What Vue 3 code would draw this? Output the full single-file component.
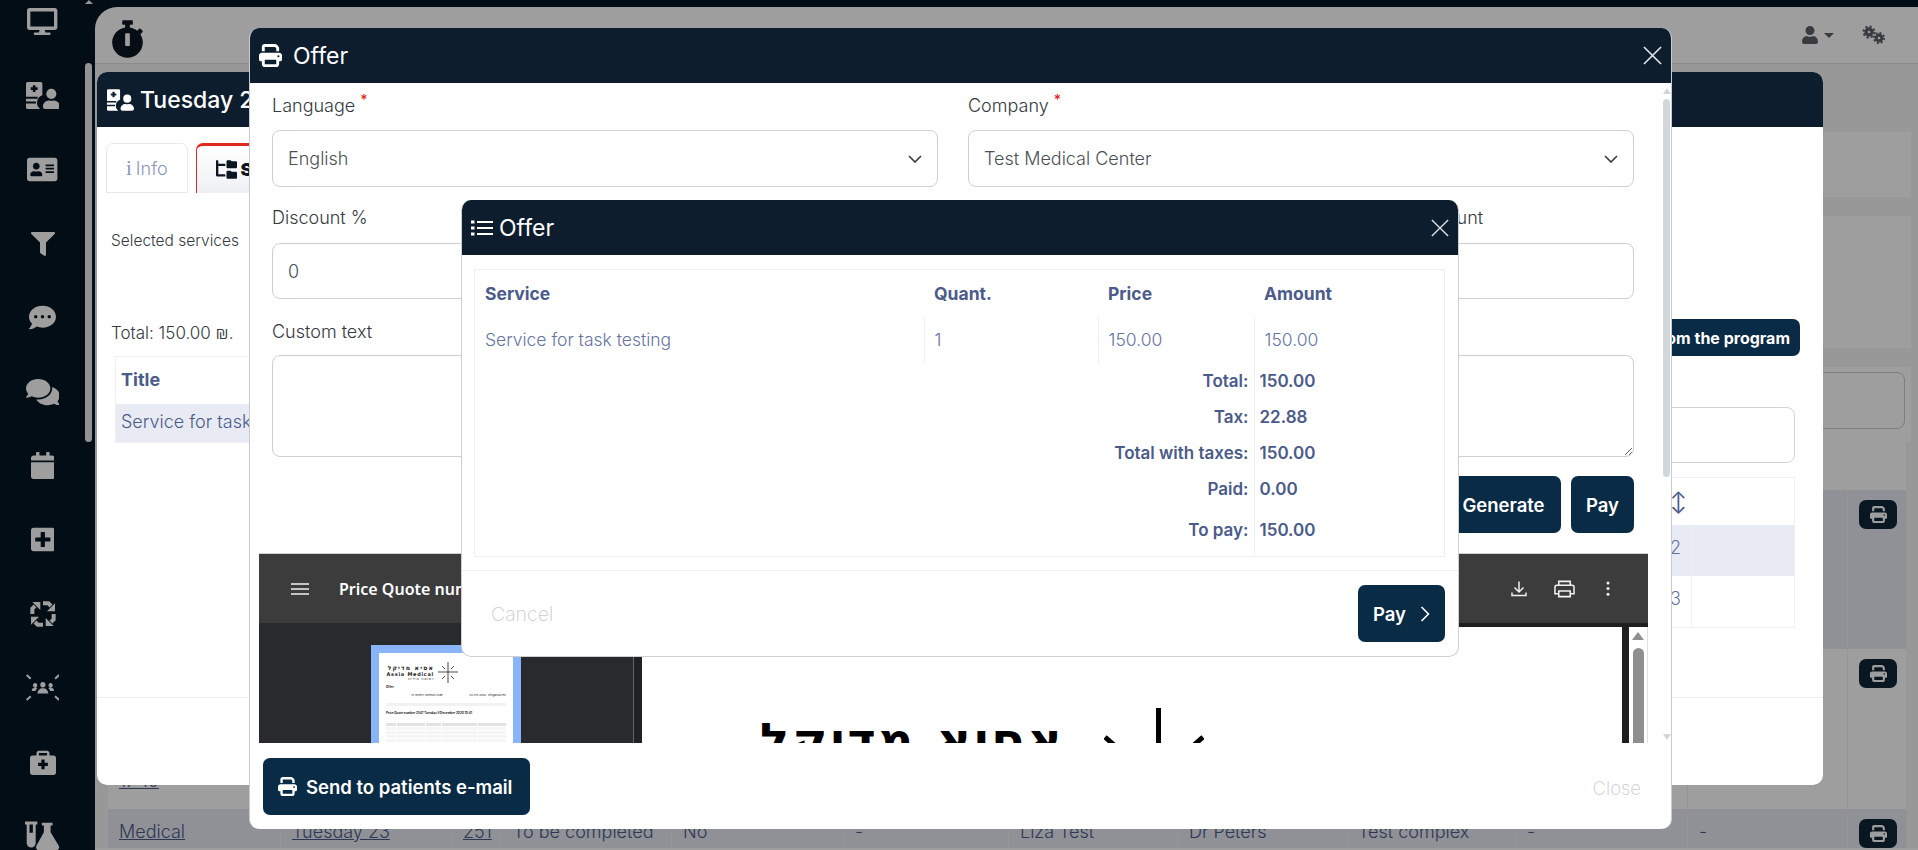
<script setup>
const printPath = 'M128 0C92.7 0 64 28.7 64 64v96h64V64H354.7L384 93.3V160h64V93.3c0-17-6.7-33.3-18.7-45.3L400 18.7C388 6.7 371.7 0 354.7 0H128zM384 352v32 64H128V384 368 352H384zm64 32h32c17.7 0 32-14.3 32-32V256c0-35.3-28.7-64-64-64H64c-35.3 0-64 28.7-64 64v96c0 17.7 14.3 32 32 32H64v64c0 35.3 28.7 64 64 64H384c35.3 0 64-28.7 64-64V384zM432 248a24 24 0 1 1 0 48 24 24 0 1 1 0-48z'
const hospitalUser = [
  'M30 0H280a30 30 0 0 1 30 30V250a150 150 0 0 0-40 262H30a30 30 0 0 1-30-30V30A30 30 0 0 1 30 0zM130 60v40H90v50h40v40h50v-40h40v-50h-40V60zM0 280v36h220v-36zM0 370v36h190v-36z',
  'M480 320a96 96 0 1 0-96-96 96 96 0 0 0 96 96zm48 32h-8.7a156 156 0 0 1-78.6 0H432a112 112 0 0 0-112 112 48 48 0 0 0 48 48h224a48 48 0 0 0 48-48 112 112 0 0 0-112-112z'
]

// меню слева, сверху вниз
const menu = [
  { h: 27, box: '0 0 576 512', paths: ['M528 0H48C21.5 0 0 21.5 0 48v320c0 26.5 21.5 48 48 48h192l-16 48h-72c-13.3 0-24 10.7-24 24s10.7 24 24 24h272c13.3 0 24-10.7 24-24s-10.7-24-24-24h-72l-16-48h192c26.5 0 48-21.5 48-48V48c0-26.5-21.5-48-48-48zm-16 352H64V64h448v288z'] },
  { h: 27, box: '0 0 640 512', paths: hospitalUser },
  { h: 27, box: '0 0 576 512', paths: ['M528 32H48C21.5 32 0 53.5 0 80v352c0 26.5 21.5 48 48 48h480c26.5 0 48-21.5 48-48V80c0-26.5-21.5-48-48-48zm-352 96c35.3 0 64 28.7 64 64s-28.7 64-64 64-64-28.7-64-64 28.7-64 64-64zm112 236.8c0 10.6-10 19.2-22.4 19.2H86.4C74 384 64 375.4 64 364.8v-19.2c0-31.8 30.1-57.6 67.2-57.6h5c12.3 5.1 25.7 8 39.8 8s27.6-2.9 39.8-8h5c37.1 0 67.2 25.8 67.2 57.6v19.2zM512 312c0 4.4-3.6 8-8 8H360c-4.4 0-8-3.6-8-8v-16c0-4.4 3.6-8 8-8h144c4.4 0 8 3.6 8 8v16zm0-64c0 4.4-3.6 8-8 8H360c-4.4 0-8-3.6-8-8v-16c0-4.4 3.6-8 8-8h144c4.4 0 8 3.6 8 8v16zm0-64c0 4.4-3.6 8-8 8H360c-4.4 0-8-3.6-8-8v-16c0-4.4 3.6-8 8-8h144c4.4 0 8 3.6 8 8v16z'] },
  { h: 24, box: '0 0 512 512', paths: ['M487.976 0H24.028C2.71 0-8.047 25.866 7.058 40.971L192 225.941V432c0 7.831 3.821 15.17 10.237 19.662l80 55.98C298.02 518.69 320 507.493 320 487.98V225.941l184.947-184.97C520.021 25.896 509.338 0 487.976 0z'] },
  { h: 27, box: '0 0 512 512', paths: ['M256 32C114.6 32 0 125.1 0 240c0 49.6 21.4 95 57 130.7C44.5 421.1 2.7 466 2.2 466.5c-2.2 2.3-2.8 5.7-1.5 8.7S4.8 480 8 480c66.3 0 116-31.8 140.6-51.4 32.7 12.3 69 19.4 107.4 19.4 141.4 0 256-93.1 256-208S397.4 32 256 32zM128 272c-17.7 0-32-14.3-32-32s14.3-32 32-32 32 14.3 32 32-14.3 32-32 32zm128 0c-17.7 0-32-14.3-32-32s14.3-32 32-32 32 14.3 32 32-14.3 32-32 32zm128 0c-17.7 0-32-14.3-32-32s14.3-32 32-32 32 14.3 32 32-14.3 32-32 32z'] },
  { h: 30, box: '0 0 576 512', paths: ['M416 192c0-88.4-93.1-160-208-160S0 103.6 0 192c0 34.3 14.1 65.9 38 92-13.4 30.2-35.5 54.2-35.8 54.5-2.2 2.3-2.8 5.7-1.5 8.7S4.8 352 8 352c36.6 0 66.9-12.3 88.7-25 32.2 15.7 70.3 25 111.3 25 114.9 0 208-71.6 208-160zm122 220c23.9-26 38-57.7 38-92 0-66.9-53.5-124.2-129.3-148.1.9 6.6 1.3 13.3 1.3 20.1 0 105.9-107.7 192-240 192-10.8 0-21.3-.8-31.7-1.9C207.8 439.6 281.8 480 368 480c41 0 79.1-9.2 111.3-25 21.8 12.7 52.1 25 88.7 25 3.2 0 6.1-1.9 7.3-4.8 1.3-2.9.7-6.3-1.5-8.7-.3-.3-22.4-24.2-35.8-54.5z'] },
  { h: 27, box: '0 0 448 512', paths: ['M12 192h424c6.6 0 12 5.4 12 12v260c0 26.5-21.5 48-48 48H48c-26.5 0-48-21.5-48-48V204c0-6.6 5.4-12 12-12zm436-44v-36c0-26.5-21.5-48-48-48h-48V12c0-6.6-5.4-12-12-12h-40c-6.6 0-12 5.4-12 12v52H160V12c0-6.6-5.4-12-12-12h-40c-6.6 0-12 5.4-12 12v52H48C21.5 64 0 85.5 0 112v36c0 6.6 5.4 12 12 12h424c6.6 0 12-5.4 12-12z'] },
  { h: 27, box: '0 0 448 512', paths: ['M400 32H48C21.5 32 0 53.5 0 80v352c0 26.5 21.5 48 48 48h352c26.5 0 48-21.5 48-48V80c0-26.5-21.5-48-48-48zm-32 252c0 6.6-5.4 12-12 12h-92v92c0 6.6-5.4 12-12 12h-56c-6.6 0-12-5.4-12-12v-92H92c-6.6 0-12-5.4-12-12v-56c0-6.6 5.4-12 12-12h92v-92c0-6.6 5.4-12 12-12h56c6.6 0 12 5.4 12 12v92h92c6.6 0 12 5.4 12 12v56z'] },
  { h: 32, box: '0 0 24 24', paths: ['M21 4V10H15Z', 'M20 21H14V15Z', 'M3 20V14H9Z', 'M4 3H10V9Z'], strokes: ['M12 4H16L18 6', 'M20 12V16L18 18', 'M12 20H8L6 18', 'M4 12V8L6 6'], sw: 3 },
  { h: 27, box: '0 0 100 80', paths: ['M50 24a8 8 0 1 0 .01 0zM27 27a6.5 6.5 0 1 0 .01 0zM73 27a6.5 6.5 0 1 0 .01 0zM34 58c0-10 7-16 16-16s16 6 16 16zM17 50c0-7 5-10 11-10 2 0 4 .5 6 1.500-3 3-5 6-5.500 8.500zM83 50c0-7-5-10-11-10-2 0-4 .5-6 1.500 3 3 5 6 5.500 8.500z'], strokes: ['M2 3L14 14M98 3L86 14M2 77L14 66M98 77L86 66'], sw: 6 },
  { h: 26, box: '0 0 512 512', paths: ['M464 128h-80V80c0-26.5-21.5-48-48-48H176c-26.5 0-48 21.5-48 48v48H48c-26.5 0-48 21.5-48 48v288c0 26.5 21.5 48 48 48h416c26.5 0 48-21.5 48-48V176c0-26.5-21.5-48-48-48zM176 80h160v48H176V80zm176 248c0 4.4-3.6 8-8 8h-56v56c0 4.4-3.6 8-8 8h-48c-4.4 0-8-3.6-8-8v-56h-56c-4.4 0-8-3.6-8-8v-48c0-4.4 3.6-8 8-8h56v-56c0-4.4 3.6-8 8-8h48c4.4 0 8 3.6 8 8v56h56c4.4 0 8 3.6 8 8v48z'] },
  { h: 30, box: '0 0 640 512', paths: ['M0 0H220V50H190V380a80 80 0 0 1-160 0V50H0zM80 50V200H140V50z', 'M300 20H490V70H455V190L600 430a55 55 0 0 1-47 82H250a55 55 0 0 1-47-82L335 190V70H300z'] }
]

// строки таблицы за модалками
const columns = ['Medical', 'Tuesday 23', '251', 'To be completed', 'No', '-', 'Liza Test', 'Dr Peters', 'Test complex', '-', '-']

const summary = [
  { label: 'Total:', value: '150.00' },
  { label: 'Tax:', value: '22.88' },
  { label: 'Total with taxes:', value: '150.00' },
  { label: 'Paid:', value: '0.00' },
  { label: 'To pay:', value: '150.00' }
]
</script>

<template>
  <div class="app">
    <aside class="sidebar">
      <div class="side-icons">
        <div v-for="(item, i) in menu" :key="i" class="side-slot">
          <svg :viewBox="item.box" :style="{ height: item.h + 'px' }" class="side-icon">
            <path v-for="d in item.paths" :key="d" :d="d" fill="#fff" fill-rule="evenodd" />
            <path v-for="d in item.strokes" :key="d" :d="d" fill="none" stroke="#fff" :stroke-width="item.sw" />
          </svg>
        </div>
      </div>
      <div class="side-scroll"><span class="side-up"></span><span class="side-thumb"></span></div>
    </aside>

    <main class="main">
      <div class="top-strip"></div>
      <div class="page">
        <header class="topbar">
          <svg class="stopwatch" viewBox="0 0 448 512"><path d="M432 304c0 114.9-93.1 208-208 208S16 418.9 16 304c0-104 76.3-190.2 176-205.5V64h-28c-6.6 0-12-5.4-12-12V12c0-6.6 5.4-12 12-12h120c6.6 0 12 5.4 12 12v40c0 6.6-5.4 12-12 12h-28v34.5c37.5 5.8 71.7 21.6 99.7 44.6l27.5-27.5c4.7-4.7 12.3-4.7 17 0l28.3 28.3c4.7 4.7 4.7 12.3 0 17l-29.4 29.4-.6.6C419.7 223.3 432 262.2 432 304zm-176 36V188.5c0-6.6-5.4-12-12-12h-40c-6.6 0-12 5.4-12 12V340c0 6.6 5.4 12 12 12h40c6.6 0 12-5.4 12-12z" fill="#0c1622" /></svg>
          <div class="top-right">
            <svg class="top-user" viewBox="0 0 448 512"><path d="M224 256c70.7 0 128-57.3 128-128S294.7 0 224 0 96 57.3 96 128s57.3 128 128 128zm89.6 32h-16.7c-22.2 10.2-46.9 16-72.9 16s-50.6-5.8-72.9-16h-16.7C60.2 288 0 348.2 0 422.4V464c0 26.5 21.500 48 48 48h352c26.500 0 48-21.500 48-48v-41.600c0-74.200-60.200-134.400-134.400-134.400z" fill="#5b6168" /></svg>
            <span class="caret"></span>
            <svg class="top-cogs" viewBox="0 0 24 20" fill="none" stroke="#5b6168">
              <circle cx="7" cy="7" r="3" stroke-width="3.4" />
              <circle cx="7" cy="7" r="5.5" stroke-width="2" stroke-dasharray="2.2 2.1" />
              <circle cx="17" cy="13" r="2.8" stroke-width="3.2" />
              <circle cx="17" cy="13" r="5" stroke-width="2" stroke-dasharray="2 1.9" />
            </svg>
          </div>
        </header>

        <div class="content">
          <div class="card card-a"></div>
          <div class="card card-b"></div>
          <div class="card card-c"><div class="card-field"></div></div>
          <div class="grid-table">
            <div class="grid-row row-head"><div class="grid-cell"></div></div>
            <div class="grid-row row-tall stripe">
              <div v-for="(c, i) in columns" :key="i" class="grid-cell"></div>
              <div class="grid-cell"><button class="mini-print"><svg viewBox="0 0 512 512"><path :d="printPath" fill="#fff" /></svg></button></div>
            </div>
            <div class="grid-row row-tall">
              <div class="grid-cell cell-end"><a class="link">17:10</a></div>
              <div v-for="i in 10" :key="i" class="grid-cell"></div>
              <div class="grid-cell"><button class="mini-print"><svg viewBox="0 0 512 512"><path :d="printPath" fill="#fff" /></svg></button></div>
            </div>
            <div class="grid-row stripe">
              <div v-for="(c, i) in columns" :key="i" class="grid-cell text-cell">
                <a v-if="i < 3" class="link">{{ c }}</a>
                <span v-else>{{ c }}</span>
              </div>
              <div class="grid-cell"><button class="mini-print"><svg viewBox="0 0 512 512"><path :d="printPath" fill="#fff" /></svg></button></div>
            </div>
          </div>
        </div>
      </div>
    </main>

    <div class="backdrop"></div>

    <!-- карточка услуги -->
    <section class="modal modal-visit">
      <div class="modal-head head-visit">
        <svg viewBox="0 0 640 512" class="visit-icon">
          <path v-for="d in hospitalUser" :key="d" :d="d" fill="#fff" fill-rule="evenodd" />
        </svg>
        <span>Tuesday 23</span>
      </div>
      <div class="visit-body">
        <div class="tabs">
          <div class="tab"><b class="info-i">i</b> Info</div>
          <div class="tab tab-active">
            <svg viewBox="0 0 576 512"><path d="M544 32H432L400 0h-80c-17.67 0-32 14.33-32 32v160c0 17.67 14.33 32 32 32h224c17.67 0 32-14.33 32-32V64c0-17.67-14.33-32-32-32zm0 288H432l-32-32h-80c-17.67 0-32 14.33-32 32v160c0 17.67 14.33 32 32 32h224c17.67 0 32-14.33 32-32V352c0-17.67-14.33-32-32-32zM64 16C64 7.16 56.84 0 48 0H16C7.16 0 0 7.16 0 16v400c0 17.67 14.33 32 32 32h224v-64H64V160h192V96H64V16z" fill="#0c1622" /></svg>
            <b>Services</b>
          </div>
        </div>
        <div class="visit-cols">
          <div class="visit-left">
            <p class="selected">Selected services</p>
            <p class="total-line">Total: 150.00 ₪.</p>
            <div class="left-table">
              <div class="left-head">Title</div>
              <div class="left-row">Service for task testing</div>
            </div>
          </div>
          <div class="visit-right">
            <button class="btn btn-remove">Remove from the program</button>
            <div class="search-box">Search</div>
            <div class="right-table">
              <div class="rt-row rt-head">
                <span class="rt-a"><b class="sort">↕</b></span><span></span>
              </div>
              <div class="rt-row rt-stripe"><span class="rt-a">2</span><span class="rt-b"></span></div>
              <div class="rt-row"><span class="rt-a">3</span><span class="rt-b"></span></div>
            </div>
          </div>
        </div>
      </div>
      <div class="visit-foot"></div>
    </section>

    <!-- форма предложения -->
    <section class="modal modal-offer">
      <div class="modal-head head-offer">
        <svg viewBox="0 0 512 512" class="offer-print"><path :d="printPath" fill="#fff" /></svg>
        <span>Offer</span>
        <svg viewBox="0 0 20 20" class="close-x big"><path d="M1 1L19 19M19 1L1 19" stroke="#e8ecef" stroke-width="1.6" fill="none" /></svg>
      </div>
      <div class="offer-body">
        <div class="offer-scroll">
          <div class="form">
            <div class="form-row two">
              <div class="group">
                <label>Language<sup>*</sup></label>
                <div class="select"><span>English</span><svg viewBox="0 0 14 8"><path d="M1 1L7 7L13 1" fill="none" stroke="#343a40" stroke-width="1.6" /></svg></div>
              </div>
              <div class="group">
                <label>Company<sup>*</sup></label>
                <div class="select"><span>Test Medical Center</span><svg viewBox="0 0 14 8"><path d="M1 1L7 7L13 1" fill="none" stroke="#343a40" stroke-width="1.6" /></svg></div>
              </div>
            </div>
            <div class="form-row four">
              <div class="group"><label class="l2">Discount %</label><input class="field" value="0" /></div>
              <div class="group"><label class="l2">Tax</label><input class="field" /></div>
              <div class="group"><label class="l2">Total</label><input class="field" /></div>
              <div class="group"><label class="l2">Discount by amount</label><input class="field" /></div>
            </div>
            <div class="group text-group">
              <label class="l3">Custom text</label>
              <textarea class="area"></textarea>
            </div>
            <div class="form-actions">
              <button class="btn btn-gen">Generate</button>
              <button class="btn btn-pay-small">Pay</button>
            </div>
          </div>

          <div class="pdf">
            <div class="pdf-bar">
              <svg class="pdf-menu" viewBox="0 0 18 12"><path d="M0 1H18M0 6H18M0 11H18" stroke="#f1f1f1" stroke-width="1.6" /></svg>
              <span class="pdf-title">Price Quote number 2547 Tuesday 8 December 2020 10:41</span>
              <div class="pdf-tools">
                <svg class="t-down" viewBox="0 0 16 16" fill="none" stroke="#f1f1f1" stroke-width="1.5"><path d="M8 1V11M3.5 7L8 11.5L12.5 7M1 12V15H15V12" /></svg>
                <svg class="t-print" viewBox="0 0 22 18" fill="none" stroke="#f1f1f1" stroke-width="1.6"><path d="M5 5V1H17V5M5 14H1V7Q1 5 3 5H19Q21 5 21 7V14H17M5 11H17V17H5Z" /></svg>
                <svg class="t-dots" viewBox="0 0 4 16"><circle cx="2" cy="2" r="1.6" fill="#f1f1f1" /><circle cx="2" cy="8" r="1.6" fill="#f1f1f1" /><circle cx="2" cy="14" r="1.6" fill="#f1f1f1" /></svg>
              </div>
            </div>
            <div class="pdf-main">
              <div class="pdf-thumbs">
                <div class="thumb">
                  <div class="mini-page">
                    <div class="mini-logo">
                      <div class="mini-names">
                        <span class="mini-he">אסיא מדיקל</span>
                        <span class="mini-en">Assia Medical</span>
                        <span class="mini-sub">רפואה אילית</span>
                      </div>
                      <svg viewBox="0 0 20 21" class="mini-star"><path d="M10 0V21M0 10H20M4 4L7 7M16 4L13 7M4 17L7 14M16 17L13 14" stroke="#000" stroke-width=".7" /></svg>
                    </div>
                    <p class="mini-offer">Offer:</p>
                    <div class="mini-addr"><span>To: Beverly Simmons Israel</span><span>03-555-0000 · info@assia.test</span></div>
                    <div class="mini-sep"></div>
                    <p class="mini-offer">Price Quote number 2547 Tuesday 8 December 2020 10:41</p>
                    <div class="mini-table">
                      <div v-for="n in 5" :key="n" class="mini-line" :class="{ first: n === 1 }">
                        <i></i><i></i><i></i><i></i><i></i>
                      </div>
                    </div>
                  </div>
                </div>
                <div class="thumb-edge"></div>
              </div>
              <div class="pdf-view">
                <div class="doc">
                  <span class="doc-he" dir="rtl">אסיא מדיקל</span>
                  <svg class="doc-star" viewBox="0 0 100 40"><path d="M54.500 0V40M1 29L10 37M99 29L90 37" stroke="#000" stroke-width="5" /></svg>
                </div>
                <div class="doc-gap"></div>
                <div class="doc-scroll">
                  <span class="doc-up"></span>
                  <span class="doc-thumb"></span>
                </div>
              </div>
            </div>
          </div>
        </div>
        <div class="scrollbar">
          <span class="sb-up"></span>
          <span class="sb-thumb"></span>
          <span class="sb-down"></span>
        </div>
      </div>
      <div class="offer-foot">
        <button class="btn btn-send">
          <svg viewBox="0 0 512 512"><path :d="printPath" fill="#fff" /></svg>
          Send to patients e-mail
        </button>
        <span class="ghost">Close</span>
      </div>
    </section>

    <!-- подтверждение оплаты -->
    <section class="modal modal-pay">
      <div class="modal-head head-pay">
        <svg viewBox="0 0 22 18" class="pay-list"><path d="M0 1.500H3.500V4.500H0ZM0 7.500H3.500V10.500H0ZM0 13.500H3.500V16.500H0ZM6 2H22V4H6ZM6 8H22V10H6ZM6 14H22V16H6Z" fill="#fff" /></svg>
        <span>Offer</span>
        <svg viewBox="0 0 20 20" class="close-x"><path d="M1 1L19 19M19 1L1 19" stroke="#dfe3e7" stroke-width="1.5" fill="none" /></svg>
      </div>
      <div class="pay-table">
        <table>
          <colgroup>
            <col style="width: 449px" />
            <col style="width: 174px" />
            <col style="width: 156px" />
            <col />
          </colgroup>
          <thead>
            <tr>
              <th>Service</th>
              <th>Quant.</th>
              <th>Price</th>
              <th>Amount</th>
            </tr>
          </thead>
          <tbody>
            <tr class="svc">
              <td>Service for task testing</td>
              <td>1</td>
              <td>150.00</td>
              <td>150.00</td>
            </tr>
            <tr v-for="s in summary" :key="s.label" class="sum">
              <td colspan="3">{{ s.label }}</td>
              <td>{{ s.value }}</td>
            </tr>
          </tbody>
        </table>
      </div>
      <div class="pay-foot">
        <span class="ghost cancel">Cancel</span>
        <button class="btn btn-pay">
          Pay
          <svg viewBox="0 0 10 16"><path d="M1.500 1L8.500 8L1.500 15" fill="none" stroke="#fff" stroke-width="1.6" /></svg>
        </button>
      </div>
    </section>
  </div>
</template>

<style>
html, body {
  margin: 0;
  background: #fff;
}
</style>

<style scoped>
.app {
  position: relative;
  display: flex;
  width: 1918px;
  height: 850px;
  overflow: hidden;
  background: #061522;
  font-family: Inter, "Liberation Sans", "DejaVu Sans", sans-serif;
  font-weight: 300;
  color: #343a40;
}

.sidebar {
  display: flex;
  width: 95px;
  flex: none;
  background: #061522;
}
.side-icons {
  width: 85px;
  margin-top: -15.5px;
}
.side-slot {
  display: flex;
  align-items: center;
  justify-content: center;
  height: 74px;
}
.side-icon {
  display: block;
  max-width: 36px;
}
.side-scroll {
  display: flex;
  flex-direction: column;
  align-items: center;
  width: 7px;
}
.side-up {
  width: 0;
  height: 0;
  margin-bottom: 59px;
  border: 4px solid transparent;
  border-bottom: 4px solid #ededed;
  border-top: 0;
}
.side-thumb {
  display: block;
  width: 7px;
  height: 379px;
  border-radius: 4px;
  background: #ededed;
}

.main {
  flex: 1;
  min-width: 0;
}
.top-strip {
  height: 7px;
}
.page {
  height: 843px;
  border-top-left-radius: 22px;
  overflow: hidden;
  background: #fff;
}
.topbar {
  display: flex;
  align-items: center;
  justify-content: space-between;
  height: 56px;
  padding: 0 32px 0 16px;
  border-bottom: 1px solid #e0e0e0;
}
.stopwatch {
  width: 33px;
  height: 38px;
  margin-top: 8px;
}
.top-right {
  display: flex;
  align-items: center;
}
.top-user {
  width: 16px;
  height: 18px;
}
.caret {
  width: 0;
  height: 0;
  margin: 0 28px 0 6px;
  border: 5px solid transparent;
  border-top-color: #5b6168;
  border-bottom: 0;
}
.top-cogs {
  width: 24px;
  height: 20px;
}

.content {
  padding: 68px 7px 0 13px;
  background: #f6f6f6;
}
.card {
  margin-bottom: 19px;
  background: #fff;
}
.card-a {
  height: 65px;
}
.card-b {
  height: 132px;
}
.card-c {
  height: 75px;
  margin-bottom: 0;
  padding: 5px 6px 0 0;
  box-sizing: border-box;
}
.card-field {
  height: 57px;
  border: 1px solid #ccc;
  border-radius: 8px;
  box-sizing: border-box;
}
.grid-table {
  margin-right: 5px;
  background: #fff;
}
.grid-row {
  display: grid;
  grid-template-columns: 173px 171px 50px 170px 172px 165px 169px 169px 169px 172px 160px 1fr;
  font-size: 18px;
  color: #4b5b8a;
}
.row-head {
  height: 48px;
}
.row-tall:nth-child(2) {
  height: 159px;
}
.row-tall:nth-child(3) {
  height: 160px;
}
.stripe {
  background: #e8ebf3;
}
.grid-cell {
  padding: 10px 0 0 11px;
  border-right: 1px solid #f0f0f0;
  min-width: 0;
}
.grid-cell:nth-child(12) {
  border-right: 0;
}
.text-cell {
  padding-top: 12px;
}
.cell-end {
  display: flex;
  align-items: flex-end;
  padding-bottom: 18px;
}
.link {
  text-decoration: underline;
}
.mini-print {
  display: flex;
  align-items: center;
  justify-content: center;
  width: 38px;
  height: 29px;
  padding: 0;
  border: 0;
  border-radius: 7px;
  background: #0f2638;
}
.mini-print svg {
  width: 17px;
  height: 17px;
}

.backdrop {
  position: absolute;
  inset: 0;
  background: rgba(0, 0, 0, 0.38);
}

.modal {
  position: absolute;
  display: flex;
  flex-direction: column;
  box-sizing: border-box;
  background: #fff;
  overflow: hidden;
}
.modal-head {
  display: flex;
  align-items: center;
  flex: none;
  background: #0d1d2e;
  color: #fff;
  font-weight: 400;
}

.modal-visit {
  left: 97px;
  top: 72px;
  width: 1726px;
  height: 713px;
  border-radius: 10px;
}
.head-visit {
  height: 55px;
  padding-left: 10px;
  font-size: 23px;
  font-weight: 500;
}
.visit-icon {
  width: 27px;
  height: 24px;
  margin-right: 6px;
}
.visit-body {
  flex: 1;
  padding: 16px 28px 0 9px;
}
.tabs {
  display: flex;
  gap: 8px;
  height: 50px;
}
.tab {
  display: flex;
  align-items: center;
  gap: 4px;
  box-sizing: border-box;
  padding: 0 19px;
  border: 1px solid #e9e9e9;
  border-bottom-width: 1px;
  border-radius: 7px 7px 0 0;
  font-size: 18px;
  color: #8a97b8;
}
.info-i {
  font-family: "Liberation Serif", serif;
  font-size: 21px;
}
.tab-active {
  width: 200px;
  padding-left: 19px;
  border: 0;
  border-top: 3px solid #e02a1f;
  border-left: 1px solid #e02a1f;
  background: linear-gradient(#fff, #eef0f4);
  color: #0c1622;
  font-weight: 700;
}
.tab-active svg {
  width: 21px;
  height: 19px;
}
.visit-cols {
  display: flex;
  justify-content: space-between;
}
.visit-left {
  width: 900px;
  padding: 39px 0 0 5px;
}
.selected {
  margin: 0;
  font-size: 15.5px;
  line-height: 18px;
}
.total-line {
  margin: 73px 0 0;
  font-size: 17px;
  line-height: 20px;
}
.left-table {
  margin: 13px 0 0 4px;
  color: #4b5b8a;
  font-size: 18px;
  border: 1px solid #f0f0f0;
}
.left-head {
  height: 47px;
  padding: 12px 5px;
  box-sizing: border-box;
  font-weight: 700;
}
.left-row {
  height: 38px;
  padding: 7px 5px;
  box-sizing: border-box;
  background: #e8ebf3;
}
.visit-right {
  width: 700px;
  padding-top: 126px;
  display: flex;
  flex-direction: column;
  align-items: flex-end;
}
.btn {
  border: 0;
  border-radius: 7px;
  background: #0a2b45;
  color: #fff;
  font: 600 18.5px Inter, "Liberation Sans", sans-serif;
}
.btn-remove {
  height: 37px;
  margin-right: -5px;
  padding: 0 10px;
  font-size: 16px;
  font-weight: 700;
}
.search-box {
  width: 700px;
  height: 56px;
  margin-top: 51px;
  padding: 16px 122px 0 0;
  border: 1px solid #d0d4da;
  border-radius: 8px;
  box-sizing: border-box;
  text-align: right;
  color: #c4c8ce;
  font-size: 16px;
}
.right-table {
  width: 700px;
  margin-top: 14px;
  border: 1px solid #f0f0f0;
  box-sizing: border-box;
}
.rt-row {
  display: grid;
  grid-template-columns: 1fr 103px;
  height: 51px;
  font-size: 18px;
  color: #66749f;
}
.rt-head {
  height: 47px;
}
.rt-stripe {
  background: #e8ebf3;
}
.rt-a {
  padding: 12px 0 0 574px;
}
.rt-b {
  border-left: 1px solid #eef0f4;
}
.sort {
  color: #4b5b8a;
  font-size: 20px;
}
.visit-foot {
  height: 87px;
  border-top: 1px solid #eee;
}

.modal-offer {
  left: 249px;
  top: 28px;
  width: 1423px;
  height: 801px;
  border-radius: 10px;
  border-left: 1px solid #c8ccd2;
  border-right: 1px solid #c8ccd2;
}
.head-offer {
  height: 55px;
  padding: 0 9px 0 9px;
  font-size: 23px;
}
.offer-print {
  width: 23px;
  height: 23px;
  margin-right: 11px;
}
.close-x {
  width: 18px;
  height: 18px;
  margin-left: auto;
}
.close-x.big {
  width: 19px;
  height: 19px;
}
.offer-body {
  display: flex;
  height: 660px;
  flex: none;
  overflow: hidden;
}
.offer-scroll {
  width: 1389px;
  padding-left: 9px;
  flex: none;
}
.form {
  padding: 11px 14px 0 13px;
}
.form-row {
  display: grid;
  gap: 30px;
}
.form-row.two {
  grid-template-columns: 1fr 1fr;
  margin-bottom: 19px;
}
.form-row.four {
  grid-template-columns: repeat(4, 1fr);
  margin-bottom: 21px;
}
.group label {
  display: block;
  height: 24px;
  margin-bottom: 12px;
  font-size: 18px;
  line-height: 24px;
}
.group label.l2 {
  margin-bottom: 13px;
}
.group label.l3 {
  margin-bottom: 11px;
}
.group sup {
  margin-left: 5px;
  color: #e02a1f;
  font-size: 14px;
  font-weight: 500;
  line-height: 0;
  vertical-align: 7px;
}
.select,
.field {
  display: flex;
  align-items: center;
  justify-content: space-between;
  box-sizing: border-box;
  width: 100%;
  height: 57px;
  padding: 0 15px;
  border: 1px solid #ccd0d6;
  border-radius: 8px;
  background: #fff;
  color: #4a4f55;
  font: 300 18px Inter, "Liberation Sans", sans-serif;
  outline: none;
}
.select svg {
  width: 14px;
  height: 8px;
}
.field {
  height: 56px;
}
.area {
  display: block;
  box-sizing: border-box;
  width: 100%;
  height: 102px;
  margin: 0;
  border: 1px solid #ccd0d6;
  border-radius: 8px;
  outline: none;
}
.form-actions {
  display: flex;
  justify-content: flex-end;
  gap: 10px;
  margin-top: 19px;
}
.btn-gen {
  width: 115px;
  height: 57px;
}
.btn-pay-small {
  width: 63px;
  height: 57px;
}

.pdf {
  margin-top: 20px;
  height: 300px;
  background: #282a2d;
}
.pdf-bar {
  display: flex;
  align-items: center;
  height: 70px;
  background: #3c3c3c;
  border-top: 1px solid #d0d0d0;
  box-sizing: border-box;
}
.pdf-menu {
  width: 18px;
  height: 12px;
  margin-left: 32px;
}
.pdf-title {
  margin-left: 30px;
  color: #fff;
  font: 600 16px "Noto Sans", sans-serif;
  white-space: nowrap;
}
.pdf-tools {
  display: flex;
  align-items: center;
  margin-left: auto;
  padding-right: 38px;
}
.t-down {
  width: 16px;
  height: 17px;
  margin-right: 27px;
}
.t-print {
  width: 21px;
  height: 18px;
  margin-right: 31px;
}
.t-dots {
  width: 4px;
  height: 15px;
}
.pdf-main {
  display: flex;
  height: 230px;
}
.pdf-thumbs {
  display: flex;
  width: 383px;
  flex: none;
  padding: 22px 0 0 112px;
  box-sizing: border-box;
}
.thumb {
  width: 151px;
  height: 200px;
  padding: 8px 8px 0;
  box-sizing: border-box;
  background: #8ab4f8;
}
.mini-page {
  height: 200px;
  padding: 9px 7px;
  box-sizing: border-box;
  background: #fff;
  color: #222;
  font-weight: 400;
}
.thumb-edge {
  width: 8px;
  margin: -22px 0 0 112px;
  height: 230px;
  flex: none;
  border-left: 1px solid #666;
  background: #202124;
}
.mini-logo {
  display: flex;
  align-items: center;
  justify-content: flex-end;
  padding-right: 48px;
}
.mini-names {
  display: flex;
  flex-direction: column;
  align-items: flex-end;
  margin-right: 4px;
  line-height: 6.500px;
}
.mini-he {
  font: 700 6px "DejaVu Sans", sans-serif;
  letter-spacing: 1.2px;
}
.mini-en {
  font: 700 5px "DejaVu Sans", sans-serif;
  letter-spacing: .7px;
}
.mini-sub {
  font: 400 3.5px "DejaVu Sans", sans-serif;
  letter-spacing: .6px;
}
.mini-star {
  width: 20px;
  height: 21px;
  flex: none;
}
.mini-offer {
  margin: 2px 0 0;
  font-size: 3px;
  font-weight: 700;
}
.mini-addr {
  display: flex;
  justify-content: space-between;
  margin-top: 5px;
  padding-left: 25px;
  font-size: 2.5px;
}
.mini-sep {
  height: 3px;
  margin: 6px 0 5px;
  background: #f2f2f2;
}
.mini-table {
  margin-top: 8px;
}
.mini-line {
  display: grid;
  grid-template-columns: 10px 28px 15px 35px 1fr;
  gap: 1px;
  margin-bottom: 1px;
}
.mini-line i {
  height: 3px;
  background: #f5f5f5;
}
.mini-line.first i {
  background: #e2e2e2;
}

.pdf-view {
  display: flex;
  flex: 1;
  min-width: 0;
  margin-top: 4px;
  box-shadow: 0 -4px 0 #1f1f1f;
  background: #fff;
}
.doc {
  display: flex;
  flex: 1;
  gap: 39px;
  min-width: 0;
  padding: 89px 0 0 118px;
  overflow: hidden;
  background: #fff;
}
.doc-he {
  font: 700 48px/1 "DejaVu Sans", sans-serif;
  letter-spacing: 3px;
  color: #000;
  white-space: nowrap;
}
.doc-star {
  width: 100px;
  height: 40px;
  margin-top: -8px;
  flex: none;
}
.doc-gap {
  width: 7px;
  flex: none;
  background: #1f1f1f;
}
.doc-scroll {
  display: flex;
  flex-direction: column;
  align-items: center;
  width: 19px;
  flex: none;
  padding-top: 5px;
  box-sizing: border-box;
  background: #fff;
  border-right: 1px solid #dde1e6;
}
.doc-up {
  width: 0;
  height: 0;
  border: 6px solid transparent;
  border-bottom: 8px solid #8f8f8f;
  border-top: 0;
}
.doc-thumb {
  width: 11px;
  height: 200px;
  margin-top: 8px;
  border-radius: 6px;
  background: #8f8f8f;
}

.scrollbar {
  display: flex;
  flex-direction: column;
  align-items: center;
  flex: 1;
  padding: 5px 0 0 14px;
  box-sizing: border-box;
}
.sb-up {
  width: 0;
  height: 0;
  border: 4px solid transparent;
  border-bottom: 6px solid #d2d7dc;
  border-top: 0;
}
.sb-thumb {
  width: 7px;
  height: 378px;
  margin-top: 5px;
  border-radius: 4px;
  background: #d2d7dc;
}
.sb-down {
  width: 0;
  height: 0;
  margin-top: auto;
  margin-bottom: 3px;
  border: 4px solid transparent;
  border-top: 6px solid #d2d7dc;
  border-bottom: 0;
}

.offer-foot {
  display: flex;
  align-items: flex-start;
  justify-content: space-between;
  flex: 1;
  padding: 15px 30px 0 13px;
}
.btn-send {
  display: flex;
  align-items: center;
  gap: 9px;
  width: 267px;
  height: 57px;
  padding: 0 15px;
  white-space: nowrap;
}
.btn-send svg {
  width: 19px;
  height: 19px;
  flex: none;
}
.ghost {
  color: #c9ccd0;
  font-size: 18.5px;
  font-weight: 200;
}
.offer-foot .ghost {
  margin-top: 19px;
}
.cancel {
  font-size: 19.5px;
}

.modal-pay {
  left: 461px;
  top: 200px;
  width: 998px;
  height: 457px;
  border-radius: 10px;
  border: 1px solid #cfcfcf;
  border-top: 0;
}
.head-pay {
  height: 55px;
  padding: 0 10px 0 10px;
  margin: 0 -1px;
  font-size: 23px;
}
.pay-list {
  width: 22px;
  height: 18px;
  margin-right: 6px;
}
.pay-table {
  margin: 14px 13px 0 12px;
  border: 1px solid #eeeeee;
  height: 288px;
  box-sizing: border-box;
}
.pay-table table {
  width: 100%;
  table-layout: fixed;
  border-collapse: collapse;
  font-size: 17px;
  color: #4b5b8a;
}
.pay-table th,
.pay-table td {
  box-sizing: border-box;
}
.pay-table th {
  height: 48px;
  padding: 0 0 2px 10px;
  text-align: left;
  font-size: 17.5px;
  font-weight: 700;
}
.svc td {
  height: 46px;
  padding: 0 0 3px 10px;
  font-size: 17.5px;
  color: #66749f;
  border-left: 1px solid #eef0f4;
}
.svc td:first-child {
  border-left: 0;
}
.sum td {
  height: 36px;
  padding: 0 0 3px 5px;
  font-weight: 600;
}
.sum:last-child td {
  height: 46px;
}
.sum td:first-child {
  padding: 0 5px 3px 0;
  text-align: right;
}
.sum td:last-child {
  border-left: 1px solid #eef0f4;
}
.pay-foot {
  display: flex;
  align-items: center;
  justify-content: space-between;
  flex: 1;
  margin-top: 13px;
  padding: 0 13px 0 29px;
  border-top: 1px solid #eeeeee;
}
.btn-pay {
  display: flex;
  align-items: center;
  gap: 14px;
  height: 57px;
  width: 87px;
  padding: 0 15px;
}
.btn-pay svg {
  width: 10px;
  height: 16px;
}
</style>
